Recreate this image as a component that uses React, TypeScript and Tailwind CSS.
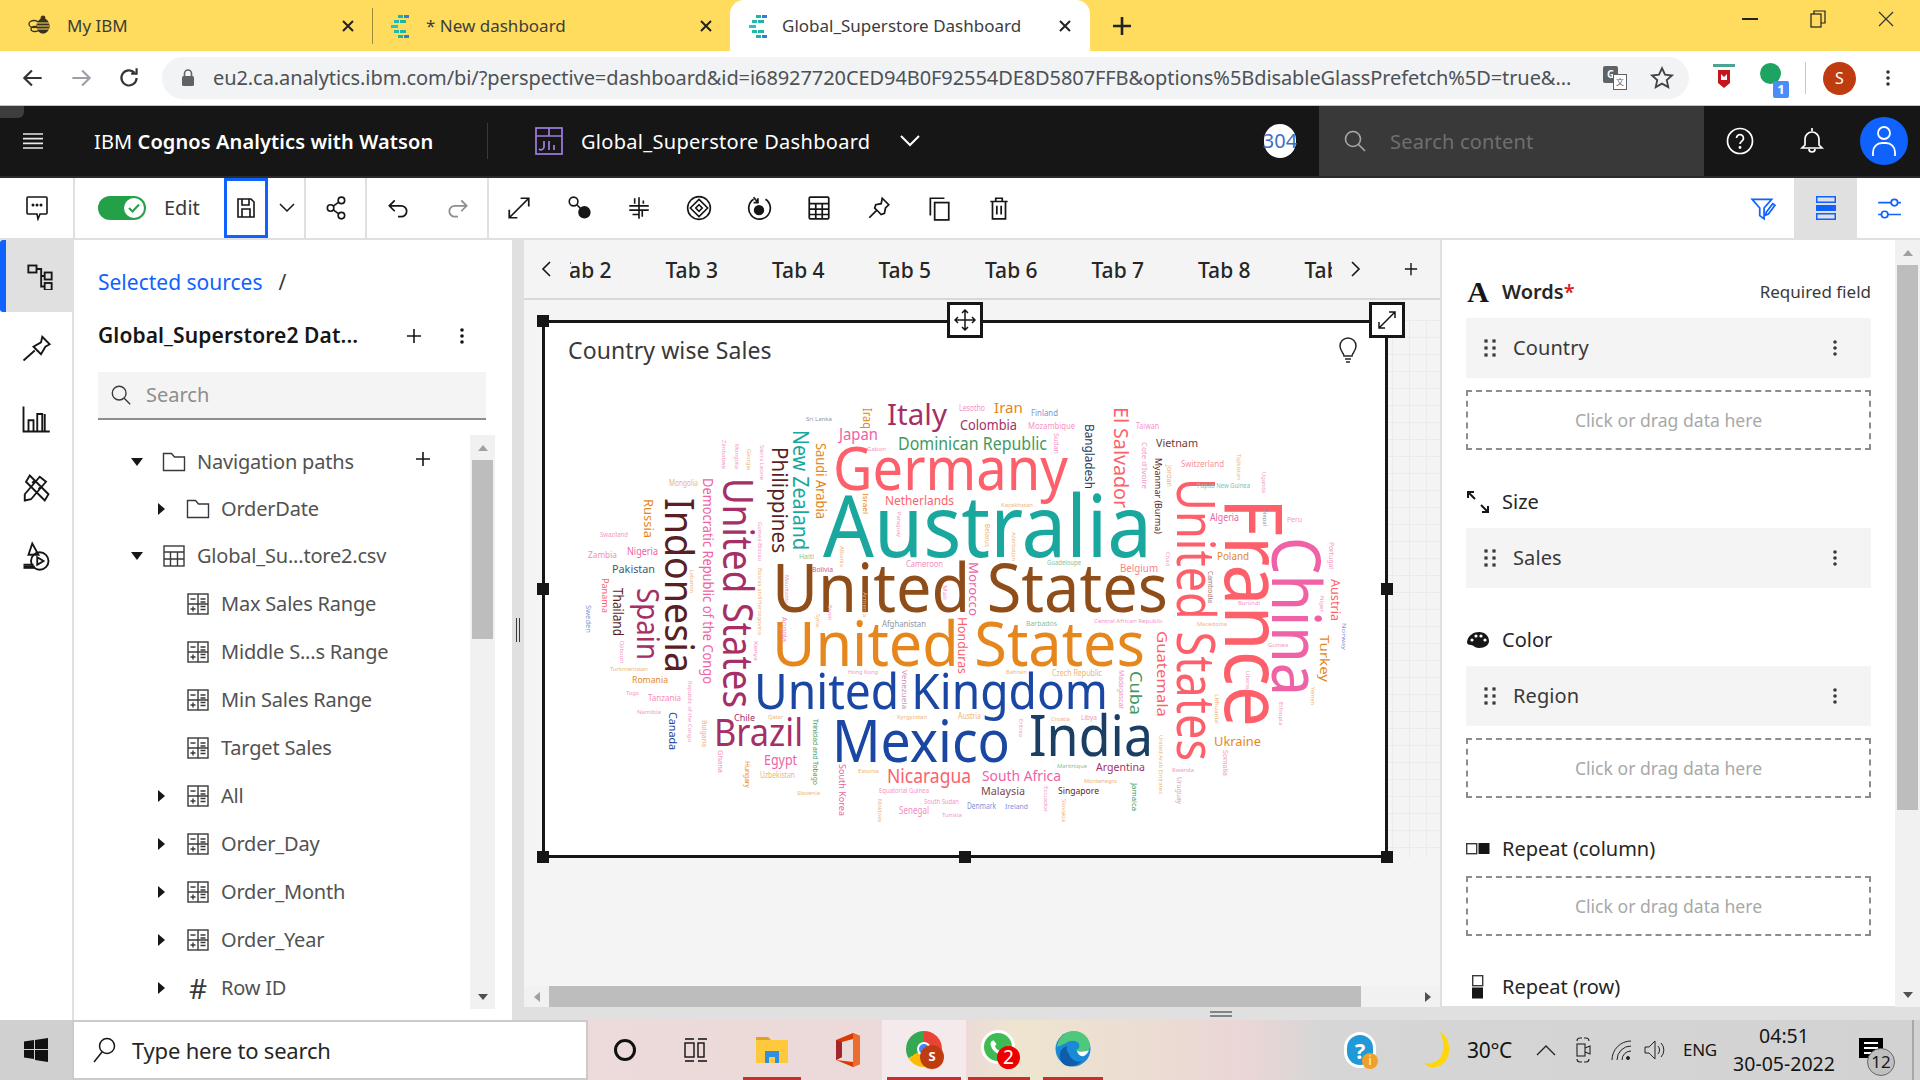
import React from "react";

const C = "#fd5f6b", T = "#19a79e", B = "#8f4d19", O = "#e5871c", L = "#1a47a3", N = "#1a3f63", M = "#a52f66", P = "#ef62a5", R = "#5a1f25", G = "#3f9a5f";
const LP = "#f496c4", LO = "#efb477", PE = "#7d93d6", LG = "#86c29b", GY = "#8a94a5";

type W = [string, number, number, number, number, string, number?];
// text, start, baseline, end, size, colour, vertical flag. For vertical words start/end are y and baseline is x.
const words: W[] = [
  ["Germany", 833, 490, 1068, 60, C],
  ["Australia", 823, 557, 1152, 85, T],
  ["United States", 772, 612, 1168, 67, B],
  ["United States", 772, 666, 1145, 62, O],
  ["United Kingdom", 754, 709, 1108, 50, L],
  ["Mexico", 832, 762, 1010, 58, L],
  ["India", 1029, 756, 1153, 56, N],
  ["Brazil", 714, 746, 803, 38, M],
  ["France", 498, 1225, 727, 80, C, 1],
  ["China", 537, 1272, 696, 68, P, 1],
  ["United States", 478, 1177, 761, 52, C, 1],
  ["United States", 478, 723, 708, 42, M, 1],
  ["Indonesia", 498, 665, 673, 40, R, 1],
  ["Spain", 588, 637, 660, 30, M, 1],
  ["Philippines", 447, 772, 553, 22, R, 1],
  ["New Zealand", 430, 793, 550, 22, T, 1],
  ["Saudi Arabia", 443, 816, 519, 14, O, 1],
  ["Iraq", 408, 863, 429, 13, O, 1],
  ["Italy", 887, 425, 947, 29, M],
  ["Japan", 839, 440, 878, 17, P],
  ["Dominican Republic", 898, 450, 1047, 18, G],
  ["Colombia", 960, 430, 1017, 14, M],
  ["Iran", 994, 413, 1023, 15, O],
  ["Lesotho", 959, 411, 985, 8, LP],
  ["Finland", 1031, 416, 1058, 9, PE],
  ["Mozambique", 1028, 429, 1075, 8, LP],
  ["Sudan", 433, 1054, 454, 7, LP, 1],
  ["Bangladesh", 424, 1085, 489, 13, N, 1],
  ["El Salvador", 407, 1114, 508, 20, C, 1],
  ["Taiwan", 1136, 429, 1159, 8, LP],
  ["Vietnam", 1156, 447, 1198, 11, "#6b3b3b"],
  ["Cote d'Ivoire", 442, 1142, 489, 7, LP, 1],
  ["Myanmar (Burma)", 458, 1155, 534, 9, R, 1],
  ["Jordan", 465, 1167, 487, 7, LO, 1],
  ["Switzerland", 1181, 467, 1224, 9, "#fb8f97"],
  ["Tajikistan", 454, 1237, 480, 6, LO, 1],
  ["Uganda", 472, 1262, 493, 6, LP, 1],
  ["Papua New Guinea", 1197, 488, 1250, 7, "#6cc7c1"],
  ["Algeria", 1210, 521, 1239, 10, P],
  ["Nepal", 510, 1263, 526, 6, GY, 1],
  ["Peru", 1287, 522, 1302, 7, LP],
  ["Portugal", 542, 1329, 569, 7, LP, 1],
  ["Austria", 579, 1331, 621, 12, C, 1],
  ["Niger", 596, 1320, 612, 6, LP, 1],
  ["Burundi", 1238, 605, 1260, 6, LP],
  ["Cambodia", 571, 1208, 603, 7, "#a5807a", 1],
  ["Poland", 1217, 560, 1249, 11, O],
  ["Chad", 552, 1166, 566, 6, LP, 1],
  ["Belgium", 1120, 572, 1158, 10, "#fb7f88"],
  ["Guadeloupe", 1047, 565, 1081, 7, LG],
  ["Azerbaijan", 532, 1012, 561, 6, LO, 1],
  ["Belarus", 524, 985, 547, 7, LO, 1],
  ["Kazakhstan", 1001, 507, 1033, 6, LO],
  ["Zimbabwe", 440, 722, 469, 6, LP, 1],
  ["Mongolia", 444, 735, 469, 6, LP, 1],
  ["Georgia", 449, 747, 470, 6, LO, 1],
  ["Sierra Leone", 445, 760, 480, 6, LP, 1],
  ["Sri Lanka", 806, 421, 832, 6, GY],
  ["Gabon", 867, 451, 886, 6, LP],
  ["Mongolia", 669, 486, 698, 8, LO],
  ["Democratic Republic of the Congo", 478, 703, 684, 14, P, 1],
  ["Russia", 499, 644, 538, 13, O, 1],
  ["Swaziland", 600, 537, 628, 7, LP],
  ["Zambia", 588, 558, 617, 8, "#f58bbd"],
  ["Nigeria", 627, 555, 658, 11, P],
  ["Pakistan", 612, 573, 655, 11, "#3b5a7a"],
  ["Panama", 578, 602, 613, 9, C, 1],
  ["Thailand", 588, 613, 636, 15, R, 1],
  ["Sweden", 605, 586, 633, 7, PE, 1],
  ["Lebanon", 570, 690, 593, 6, LO, 1],
  ["Guinea-Bissau", 522, 758, 561, 6, LP, 1],
  ["Bosnia and Herzegovina", 568, 758, 635, 6, LO, 1],
  ["Mauritania", 575, 785, 603, 6, LP, 1],
  ["Armenia", 592, 863, 617, 6, LO, 1],
  ["Mali", 585, 943, 600, 6, LP, 1],
  ["Morocco", 562, 969, 616, 13, P, 1],
  ["Cameroon", 906, 567, 943, 8, "#f58bbd"],
  ["Bolivia", 812, 572, 833, 7, "#c75a92"],
  ["Albania", 546, 840, 567, 6, LO, 1],
  ["Haiti", 799, 559, 814, 7, LG],
  ["Netherlands", 885, 505, 954, 13, C],
  ["Israel", 493, 863, 514, 7, O, 1],
  ["Paraguay", 512, 897, 537, 6, LP, 1],
  ["Benin", 605, 828, 620, 6, LP, 1],
  ["Honduras", 617, 958, 674, 13, C, 1],
  ["Afghanistan", 882, 627, 926, 8, GY],
  ["Angola", 617, 782, 642, 7, "#f58bbd", 1],
  ["Syria", 614, 816, 627, 6, LO, 1],
  ["Kenya", 641, 754, 661, 6, "#f58bbd", 1],
  ["Djibouti", 641, 620, 663, 6, LP, 1],
  ["Turkmenistan", 610, 671, 648, 6, LO],
  ["Romania", 632, 683, 668, 9, O],
  ["Togo", 626, 695, 639, 6, LP],
  ["Tanzania", 648, 701, 681, 9, "#f58bbd"],
  ["Namibia", 637, 714, 661, 6, LP],
  ["Canada", 712, 669, 750, 10, L, 1],
  ["Republic of the Congo", 681, 688, 742, 5.5, LP, 1],
  ["Bulgaria", 720, 702, 747, 7, LO, 1],
  ["Ghana", 750, 718, 773, 7, "#f58bbd", 1],
  ["Hungary", 761, 745, 788, 7, O, 1],
  ["Chile", 734, 721, 755, 9, M],
  ["Qatar", 768, 719, 783, 6, LO],
  ["Trinidad and Tobago", 719, 813, 785, 7, G, 1],
  ["Egypt", 764, 765, 797, 15, P],
  ["Uzbekistan", 760, 778, 795, 8, LO],
  ["Slovenia", 797, 795, 820, 6, LO],
  ["South Korea", 764, 839, 816, 9, P, 1],
  ["Estonia", 858, 773, 879, 6, LO],
  ["Nicaragua", 887, 783, 971, 19, C],
  ["Equatorial Guinea", 879, 793, 929, 7, LP],
  ["South Sudan", 924, 804, 959, 7, LP],
  ["Moldova", 799, 878, 822, 6, LO, 1],
  ["Senegal", 899, 814, 929, 10, "#f58bbd"],
  ["Tunisia", 942, 817, 962, 6, LP],
  ["Denmark", 967, 809, 996, 8, PE],
  ["Hong Kong", 848, 674, 878, 6, LP],
  ["Venezuela", 670, 902, 709, 7, "#c98fae", 1],
  ["Kyrgyzstan", 897, 719, 927, 6, LO],
  ["Austria", 958, 719, 981, 8, LO],
  ["Malaysia", 981, 795, 1025, 11, "#7b4a4a"],
  ["South Africa", 982, 781, 1061, 15, P],
  ["Barbados", 1026, 626, 1057, 7, LG],
  ["Central African Republic", 1094, 623, 1163, 6, LP],
  ["Macedonia", 1197, 626, 1227, 6, LO],
  ["Bahrain", 1006, 674, 1027, 6, LO],
  ["Czech Republic", 1052, 676, 1102, 8, LO],
  ["Madagascar", 670, 1119, 709, 7, "#f58bbd", 1],
  ["Cuba", 671, 1130, 715, 16, G, 1],
  ["Guatemala", 631, 1157, 717, 15, C, 1],
  ["Croatia", 1051, 721, 1070, 6, LO],
  ["Libya", 1081, 720, 1097, 7, LP],
  ["Eritrea", 719, 1019, 737, 6, LP, 1],
  ["Argentina", 1096, 771, 1145, 11, M],
  ["Martinique", 1057, 768, 1087, 6, LG],
  ["Montenegro", 1084, 783, 1117, 6, LO],
  ["Singapore", 1058, 794, 1099, 9, R],
  ["Ecuador", 786, 1044, 812, 6, LP, 1],
  ["Slovakia", 799, 1062, 822, 6, LO, 1],
  ["Ireland", 1005, 809, 1028, 7, PE],
  ["Jamaica", 783, 1132, 811, 7, G, 1],
  ["United Arab Emirates", 735, 1159, 794, 6, LO, 1],
  ["Rwanda", 1172, 772, 1194, 6, LP],
  ["Uruguay", 777, 1177, 804, 7, "#d9a3bd", 1],
  ["Somalia", 750, 1223, 776, 7, LP, 1],
  ["Ukraine", 1214, 746, 1261, 13, O],
  ["Lithuania", 694, 1215, 723, 6, LO, 1],
  ["Ethiopia", 702, 1279, 725, 6, LP, 1],
  ["Liberia", 671, 1246, 689, 6, LP, 1],
  ["Guinea", 1268, 647, 1288, 6, LP],
  ["Turkey", 635, 1320, 682, 13, O, 1],
  ["Yemen", 687, 1311, 705, 6, LO, 1],
  ["Norway", 623, 1342, 650, 6, PE, 1],
];

function Cloud() {
  return (
    <svg viewBox="545 377 841 478" className="w-[841px] h-[478px] block" style={{ fontFamily: '"Noto Sans", sans-serif', fontWeight: 400 }}>
      {words.map((w, i) => {
        const [t, a, b, c, s, col, v] = w;
        return v ? (
          <text key={i} transform={`translate(${b} ${a}) rotate(90)`} fontSize={s} fill={col} textLength={c - a} lengthAdjust="spacingAndGlyphs">{t}</text>
        ) : (
          <text key={i} x={a} y={b} fontSize={s} fill={col} textLength={c - a} lengthAdjust="spacingAndGlyphs">{t}</text>
        );
      })}
    </svg>
  );
}

const S = ({ children, s = 24, c = "#161616", w = 1.5, className = "" }: { children: React.ReactNode; s?: number; c?: string; w?: number; className?: string }) => (
  <svg width={s} height={s} viewBox="0 0 24 24" fill="none" stroke={c} strokeWidth={w} className={"block shrink-0 " + className}>{children}</svg>
);

const DashTabIcon = () => (
  <svg width="24" height="24" viewBox="0 0 24 24" className="block shrink-0">
    <rect x="9" y="1" width="5" height="3" fill="#1db5a6" /><rect x="15" y="1" width="5" height="3" fill="#2f7fd6" />
    <rect x="5" y="6" width="5" height="3" fill="#24b8a5" /><rect x="11" y="6" width="6" height="3" fill="#1db5a6" />
    <rect x="2" y="11" width="7" height="3" fill="#22c1d6" />
    <rect x="5" y="16" width="5" height="3" fill="#24b8a5" /><rect x="11" y="16" width="6" height="3" fill="#1db5a6" />
    <rect x="9" y="21" width="5" height="3" fill="#1db5a6" /><rect x="15" y="21" width="5" height="3" fill="#2f7fd6" />
  </svg>
);
const Bee = () => (
  <svg width="28" height="22" viewBox="0 0 28 22" className="block shrink-0" fill="none" stroke="#3a3320" strokeWidth="1.3">
    <ellipse cx="7" cy="9" rx="5" ry="3.5" /><ellipse cx="8" cy="14" rx="4" ry="2.5" />
    <ellipse cx="16" cy="11" rx="6" ry="7" fill="#3a3320" />
    <path d="M10 8h12M10 11h12M10 14h12" stroke="#ffdc5e" strokeWidth="1" />
    <circle cx="16" cy="3" r="1.8" fill="#3a3320" />
  </svg>
);
const X = ({ c = "#222" }: { c?: string }) => (
  <svg width="14" height="14" viewBox="0 0 14 14" stroke={c} strokeWidth="2" className="block shrink-0"><path d="M2 2l10 10M12 2L2 12" /></svg>
);
const Tab = ({ icon, label, active, w, pl, gap, xm }: { icon: React.ReactNode; label: string; active?: boolean; w: number; pl: number; gap: number; xm: number }) => (
  <div className={"flex items-center h-[51px] shrink-0 text-[17px] text-[#3c3c3c] " + (active ? "bg-white rounded-t-[14px]" : "")} style={{ width: w, paddingLeft: pl }}>
    {icon}
    <span className="whitespace-nowrap" style={{ marginLeft: gap }}>{label}</span>
    <span className="flex-1" />
    <span style={{ marginRight: xm }}><X /></span>
  </div>
);

const Calc = () => (
  <svg width="22" height="22" viewBox="0 0 22 22" fill="none" stroke="#393939" strokeWidth="1.4" className="block shrink-0">
    <rect x="1" y="1" width="20" height="20" /><path d="M1 11h20M11 1v20" />
    <path d="M3.5 6h5M13.5 6h5M13.5 9h5M13.5 13.5h5M13.5 16.5h5M3.5 16h5M6 13.5v5" />
  </svg>
);
const Folder = () => (
  <svg width="24" height="20" viewBox="0 0 24 20" fill="none" stroke="#393939" strokeWidth="1.4" className="block shrink-0"><path d="M1.5 18.5V1.5h8l3 3.5h10v13.5z" /></svg>
);
const TableI = () => (
  <svg width="22" height="22" viewBox="0 0 22 22" fill="none" stroke="#393939" strokeWidth="1.4" className="block shrink-0">
    <rect x="1" y="1" width="20" height="20" /><path d="M1 7h20M1 14h20M7.5 7v14M14.5 7v14" />
  </svg>
);
const Caret = ({ open }: { open?: boolean }) => (
  <svg width="14" height="14" viewBox="0 0 14 14" fill="#161616" className="block shrink-0">{open ? <path d="M1 3h12L7 11z" /> : <path d="M4 1v12l7-6z" />}</svg>
);
const Plus = ({ s = 16 }: { s?: number }) => (
  <svg width={s} height={s} viewBox="0 0 16 16" stroke="#161616" strokeWidth="1.6" className="block shrink-0"><path d="M8 1v14M1 8h14" /></svg>
);
const Row = ({ level, caret, icon, label, h = 48, plus }: { level: 1 | 2; caret?: "open" | "closed"; icon: React.ReactNode; label: string; h?: number; plus?: boolean }) => (
  <div className="flex items-center shrink-0" style={{ height: h, paddingLeft: level === 1 ? 56 : 80 }}>
    <span className="w-[14px] mr-[18px] shrink-0">{caret && <Caret open={caret === "open"} />}</span>
    <span className="w-[24px] mr-[11px] shrink-0 flex justify-center">{icon}</span>
    <span className="text-[20px] text-[#525252] whitespace-nowrap tracking-[-0.2px]">{label}</span>
    {plus && <span className="ml-[61px] -mt-[6px]"><Plus /></span>}
  </div>
);
const Kebab = ({ c = "#161616" }: { c?: string }) => (
  <svg width="6" height="18" viewBox="0 0 6 18" fill={c} className="block shrink-0"><circle cx="3" cy="3" r="1.8" /><circle cx="3" cy="9" r="1.8" /><circle cx="3" cy="15" r="1.8" /></svg>
);
const Drag = () => (
  <svg width="12" height="18" viewBox="0 0 12 18" fill="#393939" className="block shrink-0">
    {[2, 9, 16].map(y => [2, 10].map(x => <rect key={x + "" + y} x={x - 1.6} y={y - 1.6} width="3.2" height="3.2" />))}
  </svg>
);
const Field = ({ label }: { label: string }) => (
  <div className="h-[60px] bg-[#f4f4f4] flex items-center pl-[18px] pr-[33px] shrink-0">
    <Drag />
    <span className="ml-[17px] text-[20px] text-[#393939] flex-1 tracking-[0.1px]">{label}</span>
    <Kebab c="#393939" />
  </div>
);
const Drop = ({ mt = 12 }: { mt?: number }) => (
  <div className="h-[60px] border-2 border-dashed border-[#8d8d8d] flex items-center justify-center text-[17.6px] text-[#a8a8a8] shrink-0" style={{ marginTop: mt }}>Click or drag data here</div>
);
const Label = ({ icon, children, right, mt = 32 }: { icon: React.ReactNode; children: React.ReactNode; right?: string; mt?: number }) => (
  <div className="h-[40px] flex items-center shrink-0" style={{ marginTop: mt }}>
    <span className="w-[24px] mr-[12px] flex justify-center shrink-0">{icon}</span>
    <span className="flex-1 text-[20px] text-[#262626]">{children}</span>
    {right && <span className="text-[17px] text-[#393939]">{right}</span>}
  </div>
);
const Handle = ({ className }: { className: string }) => <div className={"absolute w-[12px] h-[12px] bg-[#161616] " + className} />;

const toolIcons: React.ReactNode[] = [
  <S key="a" s={26} w={1.6}><path d="M3 21L21 3M13.5 3H21v7.5M3 13.5V21h7.5" /></S>,
  <S key="b" s={26} w={1.5}><circle cx="7" cy="6" r="4" /><path d="M10 9l5 5" /><circle cx="17" cy="16" r="5" fill="#161616" /></S>,
  <S key="c" s={26} w={1.5}><path d="M12 2v20M8 3v5M16 5v3M3 10h18M3 14h18M6 18h6M15 20v-6" /></S>,
  <S key="d" s={26} w={1.5}><circle cx="12" cy="12" r="10.5" /><path d="M12 4l8 8-8 8-8-8z" /><path d="M12 9l3 3-3 3-3-3z" /></S>,
  <S key="e" s={26} w={1.6}><path d="M7 4A10 10 0 1 0 18 4" /><circle cx="12" cy="14" r="4" fill="#161616" /><path d="M7 2l4 5M11 3v4H7" /></S>,
  <S key="f" s={26} w={1.6}><rect x="3" y="2" width="18" height="20" rx="1" /><path d="M3 8h18M3 13h18M3 18h18M9 8v14M15 8v14" /></S>,
  <S key="g" s={26} w={1.6}><path d="M15 3l6 6-3 3-1 5-3 1-3-3-3-3 1-3 5-1zM3 21l7-7" /></S>,
  <S key="h" s={26} w={1.6}><path d="M4 19V3h13" /><rect x="8" y="7" width="13" height="16" /></S>,
  <S key="i" s={26} w={1.6}><path d="M4 6h16M9 6V3h6v3M6 6v16h12V6M10 10v8M14 10v8" /></S>,
];

export default function App() {
  const font = { fontFamily: '"Noto Sans", "Open Sans", sans-serif' };
  return (
    <div className="w-[1920px] h-[1080px] overflow-hidden flex flex-col bg-white" style={font}>
      {/* browser tabs */}
      <div className="h-[51px] bg-[#ffdc5e] flex items-center shrink-0">
        <Tab icon={<Bee />} label="My IBM" w={372} pl={27} gap={12} xm={17} />
        <div className="w-px h-[36px] bg-[#a08d3a] shrink-0" />
        <Tab icon={<DashTabIcon />} label="* New dashboard" w={357} pl={16} gap={13} xm={17} />
        <Tab icon={<DashTabIcon />} label="Global_Superstore Dashboard" active w={360} pl={17} gap={11} xm={18} />
        <span className="ml-[22px]"><svg width="20" height="20" viewBox="0 0 20 20" stroke="#222" strokeWidth="2.6" className="block"><path d="M10 1v18M1 10h18" /></svg></span>
        <span className="flex-1" />
        <span className="w-[68px] flex justify-center -mt-[14px]"><svg width="16" height="2"><rect width="16" height="2" fill="#222" /></svg></span>
        <span className="w-[68px] flex justify-center -mt-[14px]"><svg width="16" height="18" viewBox="0 0 16 18" fill="none" stroke="#222" strokeWidth="1.2"><rect x="1" y="4" width="10" height="13" /><path d="M4 4V1h11v12h-4" /></svg></span>
        <span className="w-[68px] flex justify-center -mt-[14px]"><svg width="16" height="16" viewBox="0 0 16 16" stroke="#333" strokeWidth="1.2"><path d="M1 1l14 14M15 1L1 15" /></svg></span>
      </div>
      {/* address bar */}
      <div className="h-[55px] flex items-center pl-[9px] bg-white border-b border-[#c4c4c4] shrink-0">
        <span className="w-[48px] flex justify-center"><S c="#333" w={2} s={26}><path d="M20 12H5M11 5l-7 7 7 7" /></S></span>
        <span className="w-[48px] flex justify-center"><S c="#9aa0a6" w={2} s={26}><path d="M4 12h15M13 5l7 7-7 7" /></S></span>
        <span className="w-[48px] flex justify-center"><S c="#333" w={2} s={26}><path d="M19 12a7 7 0 1 1-2-5M19 3v5h-5" /></S></span>
        <div className="ml-[9px] w-[1527px] h-[42px] rounded-full bg-[#f1f3f4] flex items-center shrink-0">
          <svg width="14" height="18" viewBox="0 0 14 18" className="ml-[19px] block shrink-0"><rect x="1" y="7" width="12" height="10" rx="1.5" fill="#5f6368" /><path d="M3.5 7V4.5a3.5 3.5 0 0 1 7 0V7" stroke="#5f6368" strokeWidth="1.6" fill="none" /></svg>
          <span className="ml-[18px] w-[1380px] text-[20px] text-[#4d5156] whitespace-nowrap overflow-hidden tracking-[-0.08px]">eu2.ca.analytics.ibm.com/bi/?perspective=dashboard&amp;id=i68927720CED94B0F92554DE8D5807FFB&amp;options%5BdisableGlassPrefetch%5D=true&amp;...</span>
          <span className="ml-[10px] w-[24px] h-[24px] shrink-0 relative">
            <span className="absolute left-0 top-0 w-[15px] h-[17px] bg-[#5f6368] rounded-[2px] flex items-center justify-center text-white text-[10px] font-bold">G</span>
            <span className="absolute right-0 bottom-0 w-[14px] h-[16px] bg-white border border-[#5f6368] flex items-center justify-center text-[#5f6368] text-[8px]" style={{ fontFamily: '"Noto Sans CJK SC", sans-serif' }}>文</span>
          </span>
          <span className="ml-[22px]"><S c="#444" w={1.7} s={26}><path d="M12 3l2.8 6 6.4.7-4.8 4.3 1.4 6.4L12 17.2 6.2 20.4l1.4-6.4L2.8 9.7 9.2 9z" /></S></span>
        </div>
        <span className="w-[23px]" />
        <svg width="24" height="30" viewBox="0 0 24 30" className="block shrink-0 mr-[24px]"><rect x="1" y="1" width="22" height="3" fill="#4ba58f" /><path d="M6 7h12v13l-6 5-6-5z" fill="#c4161c" /><path d="M9 11l3 3 3-3v6H9z" fill="#fff" /></svg>
        <span className="relative w-[24px] h-[40px] shrink-0">
          <span className="absolute left-0 top-[5px] w-[21px] h-[21px] rounded-full bg-[#1da462]" />
          <span className="absolute left-[13px] top-[23px] w-[16px] h-[17px] rounded-[2px] bg-[#4b8df8] text-white text-[13px] leading-[17px] text-center font-bold">1</span>
        </span>
        <span className="ml-[21px] w-px h-[32px] bg-[#c8c8c8]" />
        <span className="ml-[17px] w-[33px] h-[33px] rounded-full bg-[#bf3c11] text-white text-[16px] flex items-center justify-center shrink-0">S</span>
        <span className="ml-[29px]"><Kebab c="#333" /></span>
      </div>
      {/* product header */}
      <div className="h-[72px] bg-[#161616] border-b-2 border-[#2b2b2b] flex items-center relative text-white shrink-0">
        <div className="absolute left-0 top-0 w-[24px] h-[12px] rounded-br-[6px] bg-[#3d3d3d]" />
        <span className="w-[66px] flex justify-center shrink-0"><svg width="20" height="16" viewBox="0 0 20 16" stroke="#e8e8e8" strokeWidth="1.6" className="block"><path d="M0 1h20M0 5.6h20M0 10.4h20M0 15h20" /></svg></span>
        <span className="ml-[28px] pt-[2px] w-[393px] text-[20px] shrink-0 whitespace-nowrap tracking-[0.1px]">IBM <span className="font-semibold">Cognos Analytics with Watson</span></span>
        <span className="w-px h-[36px] bg-[#393939] shrink-0" />
        <svg width="28" height="28" viewBox="0 0 28 28" fill="none" stroke="#a07ee0" strokeWidth="1.7" className="block shrink-0 ml-[47px]"><rect x="1" y="1" width="26" height="26" /><path d="M1 9h26M14 1v8M9 14v6a3 3 0 0 1-5 2M14 14v9M19 18v5" /></svg>
        <span className="ml-[18px] pt-[2px] w-[316px] text-[20px] whitespace-nowrap shrink-0 tracking-[0.3px]">Global_Superstore Dashboard</span>
        <svg width="22" height="14" viewBox="0 0 22 14" fill="none" stroke="#fff" strokeWidth="2" className="block shrink-0 ml-[2px]"><path d="M2 2l9 9 9-9" /></svg>
        <span className="flex-1" />
        <span className="w-[32px] h-[34px] rounded-full bg-white text-[#3e6fc5] text-[20px] flex items-center justify-center shrink-0 mr-[23px] whitespace-nowrap"><span className="-mx-[4px]">304</span></span>
        <div className="w-[385px] h-[70px] bg-[#393939] flex items-center shrink-0">
          <span className="ml-[24px]"><S c="#a8a8a8" w={1.6} s={24}><circle cx="10" cy="10" r="7.5" /><path d="M15.5 15.5l6.5 6.5" /></S></span>
          <span className="ml-[23px] pt-[2px] text-[20px] text-[#6f6f6f] tracking-[0.2px]">Search content</span>
        </div>
        <span className="w-[72px] flex justify-center shrink-0"><svg width="28" height="28" viewBox="0 0 28 28" fill="none" stroke="#fff" strokeWidth="1.7"><circle cx="14" cy="14" r="12.5" /><path d="M10.5 11a3.5 3.5 0 1 1 5.5 3c-1.3 1-2 1.5-2 3" /><circle cx="14" cy="20.5" r=".6" fill="#fff" /></svg></span>
        <span className="w-[72px] flex justify-center shrink-0"><svg width="26" height="28" viewBox="0 0 26 28" fill="none" stroke="#fff" strokeWidth="1.7"><path d="M13 1v3M6 18v-6a7 7 0 0 1 14 0v6l3 3H3zM10 22a3 3 0 0 0 6 0" /></svg></span>
        <span className="w-[72px] flex justify-center shrink-0"><span className="w-[48px] h-[48px] rounded-full bg-[#0f62fe] flex items-center justify-center"><svg width="26" height="32" viewBox="0 0 26 32" fill="none" stroke="#fff" strokeWidth="1.8"><circle cx="13" cy="8" r="6" /><path d="M2 31v-4a9 9 0 0 1 9-9h4a9 9 0 0 1 9 9v4" /></svg></span></span>
      </div>
      {/* toolbar */}
      <div className="h-[62px] flex bg-white border-b-2 border-[#e0e0e0] shrink-0">
        <span className="w-[73px] flex items-center justify-center border-r-2 border-[#e0e0e0] shrink-0 box-content">
          <svg width="24" height="26" viewBox="0 0 24 26" fill="none" stroke="#161616" strokeWidth="1.6"><path d="M3 2h18a1 1 0 0 1 1 1v15a1 1 0 0 1-1 1h-6l-2 5-1-5H3a1 1 0 0 1-1-1V3a1 1 0 0 1 1-1z" /><circle cx="8" cy="10" r=".7" fill="#161616" /><circle cx="12" cy="10" r=".7" fill="#161616" /><circle cx="16" cy="10" r=".7" fill="#161616" /></svg>
        </span>
        <div className="w-[149px] flex items-center pl-[23px] shrink-0">
          <span className="w-[48px] h-[24px] rounded-full bg-[#24a148] flex items-center justify-end pr-[2px] shrink-0"><span className="w-[20px] h-[20px] rounded-full bg-white flex items-center justify-center"><svg width="12" height="10" viewBox="0 0 12 10" fill="none" stroke="#24a148" strokeWidth="2"><path d="M1 5l3.5 3.5L11 1.5" /></svg></span></span>
          <span className="ml-[18px] text-[20px] text-[#393939]">Edit</span>
        </div>
        <span className="w-[44px] h-[60px] border-[3px] border-[#0f62fe] flex items-center justify-center shrink-0"><S s={24} w={1.6}><path d="M4 3h13l3 3v15H4zM8 3v6h7V3M8 21v-8h8v8" /></S></span>
        <span className="w-[38px] pl-[2px] flex items-center justify-center border-r-2 border-[#e0e0e0] shrink-0"><svg width="16" height="10" viewBox="0 0 16 10" fill="none" stroke="#161616" strokeWidth="1.5"><path d="M1 1l7 7 7-7" /></svg></span>
        <span className="w-[61px] flex items-center justify-center border-r-2 border-[#e0e0e0] shrink-0"><S s={26} w={1.5}><circle cx="17" cy="5" r="3" /><circle cx="7" cy="12" r="3" /><circle cx="17" cy="19" r="3" /><path d="M9.5 10.2l5-3.6M9.5 13.8l5 3.6" /></S></span>
        <span className="w-[61px] flex items-center justify-center shrink-0"><S s={26} w={1.6}><path d="M9 5L4 10l5 5M4 10h11a5 5 0 0 1 0 10h-3" /></S></span>
        <span className="w-[61px] flex items-center justify-center border-r-2 border-[#e0e0e0] shrink-0"><S s={26} w={1.6} c="#8d8d8d"><path d="M15 5l5 5-5 5M20 10H9a5 5 0 0 0 0 10h3" /></S></span>
        {toolIcons.map((ic, i) => <span key={i} className="w-[60px] flex items-center justify-center shrink-0">{ic}</span>)}
        <span className="flex-1" />
        <span className="w-[63px] flex items-center justify-center shrink-0"><S s={26} c="#0f62fe" w={1.6}><path d="M2 4h18l-7 8v10l-4-3v-7zM15 16l6-8 2 1.5-6 8-2.5 1z" /></S></span>
        <span className="w-[63px] bg-[#e0e0e0] flex items-center justify-center shrink-0"><svg width="24" height="26" viewBox="0 0 24 26" fill="#0f62fe"><path d="M2 1h20v7H2zM3.5 2.5v4h17v-4zM2 10h20v6H2zM2 18h20v7H2zM3.5 19.5v4h17v-4z" fillRule="evenodd" /></svg></span>
        <span className="w-[63px] flex items-center justify-center shrink-0"><S s={26} c="#0f62fe" w={1.6}><path d="M2 7h12M20 7h3M2 18h3M11 18h12" /><circle cx="17" cy="7" r="3" /><circle cx="8" cy="18" r="3" /></S></span>
      </div>
      {/* main */}
      <div className="h-[780px] flex shrink-0">
        {/* rail */}
        <div className="w-[74px] shrink-0 border-r-2 border-[#e0e0e0] flex flex-col items-center">
          <div className="w-[74px] -mr-[2px] h-[72px] bg-[#e0e0e0] border-l-[6px] border-[#0f62fe] flex items-center justify-center rounded-l-[3px] shrink-0">
            <S s={28} w={1.6}><rect x="2" y="3" width="7" height="6" /><path d="M9 6h4v15h3M13 12h3" /><rect x="16" y="9" width="6" height="6" /><rect x="16" y="18" width="6" height="6" /></S>
          </div>
          <div className="h-[72px] flex items-center"><S s={30} w={1.5}><path d="M17 3l6 6-3.5 2-3.5 6-3-3-3-3 6-3.5zM2 22l9-8" /></S></div>
          <div className="h-[72px] flex items-center -mt-[1px]"><S s={30} w={1.5}><path d="M2 2v20h21M6 22V13h4v9M13 22V8h4v14M19 22V8" /></S></div>
          <div className="h-[66px] flex items-center"><S s={30} w={1.5}><path d="M7 2l15 15-3 5L4 7zM3 17L15 3l5 4L8 21l-5 1zM9 8l2-2M14 13l2-2" /></S></div>
          <div className="h-[70px] flex items-center"><S s={30} w={1.5}><path d="M9 2l5 9H6zM2 19h8" /><path d="M2 21h9" strokeWidth="2.5" /><circle cx="15" cy="16" r="7" /><path d="M13 13l5 3-5 3z" /></S></div>
        </div>
        {/* data panel */}
        <div className="w-[438px] shrink-0 flex flex-col">
          <div className="h-[68px] pt-[18px] pl-[24px] flex shrink-0">
            <div className="h-[50px] flex items-center text-[21px]"><span className="text-[#0f62fe]">Selected sources</span><span className="ml-[16px] text-[#393939]">/</span></div>
          </div>
          <div className="h-[54px] pl-[24px] pt-[1px] flex items-center shrink-0">
            <span className="w-[292px] font-semibold text-[21px] text-[#161616] whitespace-nowrap tracking-[0.1px]">Global_Superstore2 Dat...</span>
            <span className="w-[56px] flex justify-center ml-[-4px]"><Plus /></span>
            <span className="ml-[17px]"><Kebab /></span>
          </div>
          <div className="ml-[24px] mt-[10px] w-[388px] h-[48px] bg-[#f4f4f4] border-b-2 border-[#8d8d8d] flex items-center shrink-0">
            <span className="ml-[12px]"><S c="#393939" w={1.5} s={22}><circle cx="10" cy="10" r="7.5" /><path d="M15.5 15.5l6.5 6.5" /></S></span>
            <span className="ml-[14px] text-[20px] text-[#8d8d8d]">Search</span>
          </div>
          <div className="mt-[15px] h-[574px] flex shrink-0">
            <div className="w-[396px] pt-[4px] flex flex-col overflow-hidden shrink-0">
              <Row level={1} caret="open" icon={<Folder />} label="Navigation paths" h={46} plus />
              <Row level={2} caret="closed" icon={<Folder />} label="OrderDate" h={47} />
              <Row level={1} caret="open" icon={<TableI />} label="Global_Su...tore2.csv" />
              <Row level={2} icon={<Calc />} label="Max Sales Range" />
              <Row level={2} icon={<Calc />} label="Middle S...s Range" />
              <Row level={2} icon={<Calc />} label="Min Sales Range" />
              <Row level={2} icon={<Calc />} label="Target Sales" />
              <Row level={2} caret="closed" icon={<Calc />} label="All" />
              <Row level={2} caret="closed" icon={<Calc />} label="Order_Day" />
              <Row level={2} caret="closed" icon={<Calc />} label="Order_Month" />
              <Row level={2} caret="closed" icon={<Calc />} label="Order_Year" />
              <Row level={2} caret="closed" icon={<span className="text-[28px] leading-none text-[#393939]">#</span>} label="Row ID" />
            </div>
            <div className="w-[25px] h-[574px] bg-[#f1f1f1] flex flex-col items-center shrink-0 px-[2px]">
              <div className="h-[25px] flex items-center justify-center shrink-0"><svg width="10" height="6"><path d="M0 6h10L5 0z" fill="#a0a0a0" /></svg></div>
              <div className="h-[179px] w-full bg-[#bdbdbd] shrink-0" />
              <span className="flex-1" />
              <div className="h-[25px] flex items-center justify-center shrink-0"><svg width="10" height="6"><path d="M0 0h10L5 6z" fill="#505050" /></svg></div>
            </div>
          </div>
        </div>
        {/* right part */}
        <div className="flex-1 bg-[#e0e0e0] flex flex-col">
          <div className="h-[767px] flex">
            <div className="w-[12px] flex items-start justify-center shrink-0 pt-[378px] gap-[2px]">
              <span className="h-[24px] w-px bg-[#393939]" /><span className="h-[24px] w-px bg-[#393939]" />
            </div>
            {/* canvas */}
            <div className="w-[916px] h-[767px] bg-[#f4f4f4] flex flex-col shrink-0">
              <div className="h-[60px] flex items-center border-b-2 border-[#d8d8d8] shrink-0">
                <span className="w-[46px] h-full flex items-center justify-center shrink-0"><svg width="12" height="18" viewBox="0 0 12 18" fill="none" stroke="#161616" strokeWidth="1.6"><path d="M9 2L2 9l7 7" /></svg></span>
                <div className="w-[762px] h-full pt-[3px] flex items-center overflow-hidden shrink-0">
                  <div className="flex -ml-[11px] text-[21px] font-medium text-[#262626]">
                    {["Tab 2", "Tab 3", "Tab 4", "Tab 5", "Tab 6", "Tab 7", "Tab 8", "Tab 9"].map(t => <span key={t} className="w-[106.5px] shrink-0">{t}</span>)}
                  </div>
                </div>
                <span className="w-[46px] h-full flex items-center justify-center shrink-0"><svg width="12" height="18" viewBox="0 0 12 18" fill="none" stroke="#161616" strokeWidth="1.6"><path d="M3 2l7 7-7 7" /></svg></span>
                <span className="flex-1 flex justify-center pl-[4px]"><Plus s={14} /></span>
              </div>
              <div className="flex-1 pl-[18px] pt-[20px]">
                <div className="w-[898px] h-[538px] bg-[linear-gradient(#ebebeb_1px,transparent_1px),linear-gradient(90deg,#ebebeb_1px,transparent_1px)] bg-[size:17px_17px]">
                  <div className="w-[846px] h-[538px] border-[3px] border-[#161616] bg-white relative">
                    <div className="h-[54px] flex items-center pl-[23px] pr-[27px]">
                      <span className="flex-1 text-[23px] text-[#393939] tracking-[0.1px]">Country wise Sales</span>
                      <svg width="20" height="26" viewBox="0 0 20 26" fill="none" stroke="#262626" strokeWidth="1.5"><path d="M6 19c0-3-4-5-4-10a8 8 0 0 1 16 0c0 5-4 7-4 10zM7 22h6M8 25h4" /></svg>
                    </div>
                    <Cloud />
                    <Handle className="-left-[8px] -top-[8px]" />
                    <Handle className="-left-[8px] top-[260px]" />
                    <Handle className="-left-[8px] -bottom-[8px]" />
                    <Handle className="left-[414px] -bottom-[8px]" />
                    <Handle className="-right-[8px] top-[260px]" />
                    <Handle className="-right-[8px] -bottom-[8px]" />
                    <div className="absolute left-[402px] -top-[21px] w-[36px] h-[36px] bg-white border-[3px] border-[#161616] flex items-center justify-center">
                      <svg width="22" height="22" viewBox="0 0 22 22" fill="none" stroke="#161616" strokeWidth="1.5"><path d="M11 1v20M1 11h20M8 4l3-3 3 3M8 18l3 3 3-3M4 8l-3 3 3 3M18 8l3 3-3 3" /></svg>
                    </div>
                    <div className="absolute -right-[20px] -top-[21px] w-[36px] h-[36px] bg-white border-[3px] border-[#161616] flex items-center justify-center">
                      <svg width="20" height="20" viewBox="0 0 20 20" fill="none" stroke="#161616" strokeWidth="1.5"><path d="M2 18L18 2M12 2h6v6M2 12v6h6" /></svg>
                    </div>
                  </div>
                </div>
              </div>
              <div className="h-[21px] bg-[#f1f1f1] flex items-center shrink-0">
                <span className="w-[25px] flex justify-center shrink-0"><svg width="6" height="10"><path d="M6 0v10L0 5z" fill="#a0a0a0" /></svg></span>
                <div className="w-[812px] h-[21px] bg-[#bdbdbd] shrink-0" />
                <span className="flex-1 flex justify-end pr-[9px]"><svg width="6" height="10"><path d="M0 0v10l6-5z" fill="#505050" /></svg></span>
              </div>
            </div>
            <span className="w-[2px] shrink-0" />
            {/* properties */}
            <div className="w-[453px] h-[766px] bg-white pl-[24px] pr-[24px] pt-[32px] flex flex-col overflow-hidden shrink-0">
              <Label mt={0} right="Required field" icon={<span className="text-[30px] leading-none font-bold text-[#161616]" style={{ fontFamily: '"Liberation Serif", serif' }}>A</span>}><span className="font-semibold text-[#262626]">Words</span><span className="font-semibold text-[#da1e28]">*</span></Label>
              <div className="h-[6px] shrink-0" />
              <Field label="Country" />
              <Drop />
              <Label icon={<svg width="24" height="24" viewBox="0 0 24 24" fill="none" stroke="#161616" strokeWidth="2"><path d="M2 2l7 7M2 8V2h6M22 22l-7-7M22 16v6h-6" /></svg>}>Size</Label>
              <div className="h-[6px] shrink-0" />
              <Field label="Sales" />
              <Label icon={<svg width="24" height="18" viewBox="0 0 24 18"><path d="M1 11C2 4 8 1 13 1c6 0 10 4 10 9 0 4-4 7-10 7-5 0-5-3-8-3-3 0-4-1-4-3z" fill="#161616" /><circle cx="6" cy="9" r="1.6" fill="#fff" /><circle cx="10" cy="5" r="1.6" fill="#fff" /><circle cx="15" cy="5" r="1.6" fill="#fff" /><circle cx="19" cy="9" r="1.6" fill="#fff" /></svg>}>Color</Label>
              <div className="h-[6px] shrink-0" />
              <Field label="Region" />
              <Drop />
              <Label mt={31} icon={<svg width="24" height="12" viewBox="0 0 24 12"><rect x=".7" y=".7" width="10" height="10" fill="#fff" stroke="#393939" strokeWidth="1.4" /><rect x="12.5" y="0" width="11" height="11" fill="#161616" /></svg>}>Repeat (column)</Label>
              <Drop mt={7} />
              <Label mt={31} icon={<svg width="12" height="24" viewBox="0 0 12 24"><rect x=".7" y=".7" width="10" height="10" fill="#fff" stroke="#393939" strokeWidth="1.4" /><rect x="0" y="12.5" width="11" height="11" fill="#161616" /></svg>}>Repeat (row)</Label>
            </div>
            <div className="w-[25px] bg-[#f1f1f1] flex flex-col items-center shrink-0 px-[2px] h-[767px]">
              <div className="h-[25px] flex items-center justify-center shrink-0"><svg width="10" height="6"><path d="M0 6h10L5 0z" fill="#a0a0a0" /></svg></div>
              <div className="h-[545px] w-full bg-[#bdbdbd] shrink-0" />
              <span className="flex-1" />
              <div className="h-[25px] flex items-center justify-center shrink-0"><svg width="10" height="6"><path d="M0 0h10L5 6z" fill="#505050" /></svg></div>
            </div>
          </div>
          <div className="h-[13px] flex items-center shrink-0 pl-[698px]"><svg width="22" height="6"><path d="M0 1h22M0 5h22" stroke="#666" strokeWidth="1.6" /></svg></div>
        </div>
      </div>
      {/* windows taskbar */}
      <div className="h-[60px] flex shrink-0 bg-[linear-gradient(90deg,#e3e0d2_0%,#e9e3cf_9%,#ecdcdb_16%,#ecd9d9_50%,#eee5cf_53%,#ead6d6_65%,#d6d6d6_69%,#d2d2d2_100%)] text-[#161616]">
        <span className="w-[72px] bg-[#d0d0d0] flex items-center justify-center shrink-0"><svg width="24" height="24" viewBox="0 0 24 24" fill="#111"><path d="M0 3.5l10-1.4V11H0zM11 2l13-2v11H11zM0 12h10v9L0 19.6zM11 12h13v12l-13-2z" /></svg></span>
        <div className="w-[516px] h-[60px] bg-white border-2 border-[#cbcbcb] flex items-center shrink-0">
          <span className="ml-[18px]"><svg width="24" height="26" viewBox="0 0 24 26" fill="none" stroke="#161616" strokeWidth="1.5"><circle cx="15" cy="9" r="7.5" /><path d="M10 15L2 25" /></svg></span>
          <span className="ml-[16px] text-[22px] text-[#262626] whitespace-nowrap tracking-[-0.2px]">Type here to search</span>
        </div>
        <span className="w-[74px] flex items-center justify-center shrink-0"><span className="w-[22px] h-[22px] rounded-full border-[3px] border-[#111]" /></span>
        <span className="w-[68px] flex items-center justify-center shrink-0"><svg width="24" height="24" viewBox="0 0 24 24" fill="none" stroke="#111" strokeWidth="1.4"><path d="M1 1h9M1 23h9M14 1h9M14 23h9" /><rect x="1" y="5" width="9" height="14" /><rect x="14" y="5" width="6" height="14" /></svg></span>
        <span className="w-[84px] flex flex-col shrink-0">
          <span className="flex-1 flex items-center justify-center"><svg width="34" height="30" viewBox="0 0 34 30"><path d="M1 3h12l3 3h17v22a1 1 0 0 1-1 1H2a1 1 0 0 1-1-1z" fill="#ffc83d" /><path d="M1 3h12l3 3H1z" fill="#e0a020" /><path d="M10 29V17h14v12h-4v-6h-6v6z" fill="#2f8fe0" /></svg></span>
          <span className="mx-[13px] h-[3px] bg-[#c4302b]" />
        </span>
        <span className="w-[68px] flex items-center justify-center shrink-0"><svg width="30" height="36" viewBox="0 0 30 36"><path d="M3 8L20 1l7 3v28l-7 3L3 28l17 2V7L9 10v15l-6 3z" fill="#d83b01" /><path d="M20 1l7 3v28l-7 3z" fill="#eb6c2e" /><path d="M3 8l6 2v15l-6 3z" fill="#a4262c" /></svg></span>
        <span className="w-[84px] bg-[#f5eaeb] flex flex-col shrink-0">
          <span className="flex-1 flex items-center justify-center"><span className="relative w-[36px] h-[36px]">
            <span className="absolute inset-0 rounded-full bg-[conic-gradient(#ea4335_0deg_120deg,#fbbc05_120deg_240deg,#34a853_240deg_360deg)]" />
            <span className="absolute left-[11px] top-[11px] w-[14px] h-[14px] rounded-full bg-[#4285f4] border-2 border-white" />
            <span className="absolute left-[14px] top-[14px] w-[24px] h-[24px] rounded-full bg-[#bf3c11] text-white text-[13px] font-bold flex items-center justify-center">S</span>
          </span></span>
          <span className="mx-[5px] h-[3px] bg-[#c4302b]" />
        </span>
        <span className="w-[66px] flex flex-col shrink-0">
          <span className="flex-1 flex items-center justify-center"><span className="relative w-[36px] h-[38px]">
            <span className="absolute left-0 top-0 w-[34px] h-[34px] rounded-full bg-[#3fbb54] border-[3px] border-white flex items-center justify-center">
              <svg width="18" height="18" viewBox="0 0 24 24" fill="#fff"><path d="M6 3l4 5-2 3c1 3 3 5 6 6l2-2 5 4c-1 3-3 4-5 3C9 21 3 15 2 8c0-2 1-4 4-5z" /></svg>
            </span>
            <span className="absolute left-[16px] top-[16px] w-[23px] h-[23px] rounded-full bg-[#ee0000] text-white text-[19px] leading-none flex items-center justify-center">2</span>
          </span></span>
          <span className="mx-[2px] h-[3px] bg-[#c4302b]" />
        </span>
        <span className="w-[74px] flex flex-col shrink-0 pl-[8px]">
          <span className="flex-1 flex items-center justify-center"><svg width="36" height="38" viewBox="0 0 36 38"><circle cx="18" cy="19" r="17.5" fill="#1b8ad6" /><path d="M2 17C3 8 10 1 19 1c9 0 16 7 16 15 0 5-5 6-9 6-3 0-5-1-5-2 3-1 4-3 3-6-2-4-9-4-13-1-4 2-7 3-9 4z" fill="#4ec87a" /><path d="M14 24c2 6 8 9 13 7-4 4-9 6-14 5-6-1-9-6-8-13 1-4 4-6 7-7-1 3 0 6 2 8z" fill="#0f5cab" /><path d="M22 21c3 1 8 1 12-1-1 3-3 5-5 6-4 1-6-2-7-5z" fill="#fff" /></svg></span>
          <span className="mx-[3px] h-[3px] bg-[#c4302b]" />
        </span>
        <span className="w-[234px] shrink-0" />
        <span className="w-[40px] flex items-center justify-center shrink-0 relative"><span className="w-[32px] h-[36px] rounded-full bg-white flex items-center justify-center"><span className="w-[26px] h-[30px] rounded-full bg-[#1f9ad6] text-white font-bold text-[22px] leading-none flex items-center justify-center">?</span></span><span className="absolute left-[22px] top-[33px] w-[16px] h-[16px] rounded-full bg-[#f0a028] text-white text-[12px] leading-none flex items-center justify-center">i</span></span>
        <span className="ml-[40px] w-[34px] flex items-center justify-center shrink-0"><svg width="28" height="38" viewBox="0 0 28 38"><path d="M17 1c10 5 12 21 5 30-6 7-17 7-21 1 10 2 18-4 19-13 1-7-1-14-3-18z" fill="#ffd60a" /></svg></span>
        <span className="ml-[13px] text-[21px] leading-[60px] tracking-[-0.3px] w-[60px] shrink-0 whitespace-nowrap">30°C</span>
        <span className="ml-[8px] w-[22px] flex items-center justify-center shrink-0"><svg width="20" height="12" viewBox="0 0 20 12" fill="none" stroke="#222" strokeWidth="1.3"><path d="M1 11l9-9 9 9" /></svg></span>
        <span className="ml-[14px] w-[24px] flex items-center justify-center shrink-0"><svg width="18" height="26" viewBox="0 0 18 26" fill="none" stroke="#222" strokeWidth="1.1"><path d="M3 4a3 3 0 0 1 3-3h2M15 4a3 3 0 0 0-3-3h-2M3 22a3 3 0 0 0 3 3h2M15 22a3 3 0 0 1-3 3h-2" /><rect x="3" y="7" width="8" height="12" /><path d="M11 11l5-2v8l-5-2" /></svg></span>
        <span className="ml-[14px] w-[24px] flex items-center justify-center shrink-0"><svg width="24" height="24" viewBox="0 0 24 24" fill="none" stroke="#222" strokeWidth="1"><path d="M3 22A19 19 0 0 1 22 3M8 22A14 14 0 0 1 22 8M13 22a9 9 0 0 1 9-9" /><circle cx="19" cy="20" r="1.5" fill="#222" /></svg></span>
        <span className="ml-[10px] w-[24px] flex items-center justify-center shrink-0"><svg width="24" height="24" viewBox="0 0 24 24" fill="none" stroke="#222" strokeWidth="1"><path d="M2 9h4l6-6v18l-6-6H2zM15 8a6 6 0 0 1 0 8M18 5a10 10 0 0 1 0 14" /></svg></span>
        <span className="ml-[16px] text-[17px] leading-[60px] w-[42px] shrink-0 tracking-[-0.3px]">ENG</span>
        <div className="ml-[4px] w-[110px] shrink-0 flex flex-col items-center justify-center text-[19.5px] leading-[28px]"><span>04:51</span><span className="whitespace-nowrap">30-05-2022</span></div>
        <span className="flex-1 relative border-r-2 border-[#a8a8a8] mr-[6px]">
          <span className="absolute left-[20px] top-[18px] w-[24px] h-[20px] bg-black flex flex-col gap-[3px] items-center justify-center"><span className="w-[14px] h-[2px] bg-white" /><span className="w-[14px] h-[2px] bg-white" /><span className="w-[14px] h-[2px] bg-white" /></span>
          <span className="absolute left-[28px] top-[28px] w-[28px] h-[28px] rounded-full bg-[#c0c0c0] border border-[#666] text-[17px] flex items-center justify-center">12</span>
        </span>
      </div>
    </div>
  );
}
